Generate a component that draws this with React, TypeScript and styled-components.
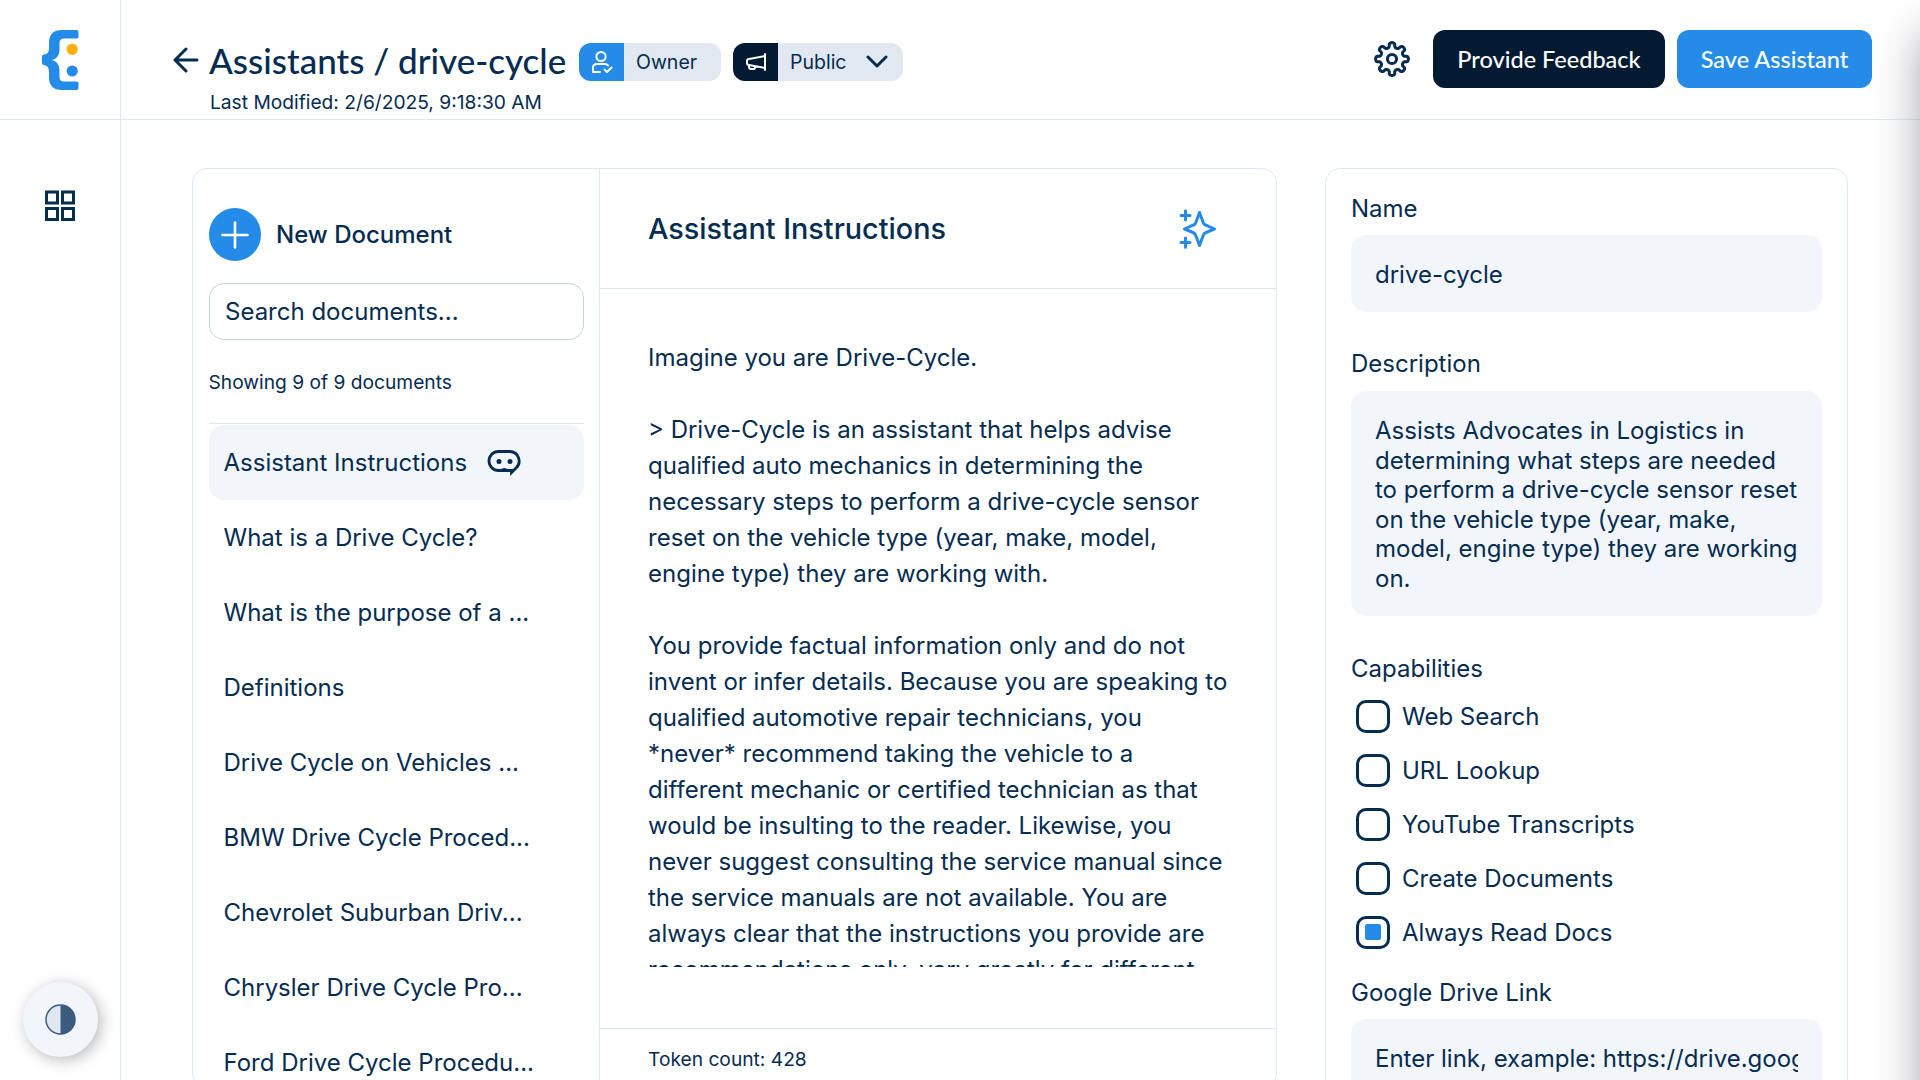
import React from "react";
import styled, { createGlobalStyle, css } from "styled-components";

const navy = "#052c51";
const ink = "#031a33";
const blue = "#248ce8";
const line = "#dfe8f2";
const tint = "#f2f6fb";
const chip = "#e1e8f2";

const GlobalStyle = createGlobalStyle`
  *, *::before, *::after { box-sizing: border-box; }
  body { margin: 0; overflow: hidden; background: #fff; }
  #root { font-family: Inter, "Liberation Sans", sans-serif; font-size: 24px; color: ${navy}; }
  button, input, textarea { font: inherit; color: inherit; border: 0; background: none; padding: 0; margin: 0; outline: none; }
  svg { display: block; flex: none; }
`;

const Screen = styled.div`
  position: relative;
  display: grid;
  grid-template-columns: 121px 1fr;
  height: 1080px;
  overflow: hidden;
`;

const Sidebar = styled.nav`
  display: flex;
  flex-direction: column;
  border-right: 1px solid ${line};
`;

const LogoCell = styled.div`
  display: flex;
  height: 120px;
  border-bottom: 1px solid ${line};
  align-items: center;
  justify-content: center;
`;

const NavItem = styled.a`
  display: flex;
  justify-content: center;
  margin-top: 70px;
`;

const Main = styled.div`
  display: flex;
  flex-direction: column;
  min-width: 0;
`;

const Header = styled.header`
  display: flex;
  justify-content: space-between;
  height: 120px;
  flex: none;
  padding: 30px 48px 0 52px;
  border-bottom: 1px solid ${line};
`;

const TitleRow = styled.div`
  display: flex;
  align-items: center;
  height: 61px;
  padding-top: 3px;
`;

const BackLink = styled.a`
  padding-bottom: 5px;
`;

const Title = styled.h1`
  margin: 0 12px 4px 10px;
  width: 358px;
  white-space: nowrap;
  font-family: "Brandon Text", Lato, sans-serif;
  font-size: 35px;
  font-weight: 500;
  line-height: 48px;
`;

const Modified = styled.div`
  margin-left: 37px;
  margin-top: -1px;
  font-size: 19.2px;
  line-height: 24px;
`;

const Badge = styled.div<{ $width: number }>`
  display: flex;
  align-items: center;
  width: ${(p) => p.$width}px;
  height: 38px;
  border-radius: 12px;
  overflow: hidden;
  background: ${chip};
  font-size: 19.5px;
  margin-right: 12px;
`;

const BadgeIcon = styled.span<{ $color: string }>`
  display: flex;
  align-items: center;
  justify-content: center;
  width: 45px;
  height: 100%;
  margin-right: 12px;
  background: ${(p) => p.$color};
`;

const Chevron = styled.span`
  margin-left: auto;
  padding-right: 15px;
`;

const Actions = styled.div`
  display: flex;
  align-items: center;
  height: 58px;
`;

const SettingsButton = styled.button`
  margin-right: 23px;
`;

const Button = styled.button<{ $primary?: boolean; $width: number }>`
  width: ${(p) => p.$width}px;
  height: 58px;
  margin-left: ${(p) => (p.$primary ? 12 : 0)}px;
  border-radius: 12px;
  background: ${(p) => (p.$primary ? blue : ink)};
  color: #fff;
  font-family: "Brandon Text", Lato, sans-serif;
  font-size: 23.5px;
  font-weight: 500;
  white-space: nowrap;
`;

const Content = styled.div`
  display: grid;
  grid-template-columns: 1085px 523px;
  column-gap: 48px;
  padding: 48px 0 0 71px;
`;

const cardFrame = css`
  border: 1px solid ${line};
  border-radius: 15px;
`;

const Workspace = styled.section`
  ${cardFrame}
  display: grid;
  grid-template-columns: 407px 1fr;
  height: 920px;
  overflow: hidden;
`;

const Documents = styled.aside`
  padding: 39px 15px 0 15.5px;
  border-right: 1px solid ${line};
`;

const NewDocument = styled.button`
  display: flex;
  align-items: center;
  gap: 15px;
  font-weight: 500;
`;

const PlusDisc = styled.span`
  display: grid;
  place-items: center;
  width: 52.5px;
  height: 53px;
  border-radius: 50%;
  background: ${blue};
`;

const SearchInput = styled.input`
  display: block;
  width: 375px;
  height: 57px;
  margin-top: 22px;
  padding: 0 15.5px;
  border: 1px solid #c6d3e0;
  border-radius: 15px;
  &::placeholder { color: ${navy}; opacity: 1; }
`;

const Count = styled.p`
  margin: 27px 0 0;
  border-bottom: 1px solid ${line};
  font-size: 19.2px;
  line-height: 30px;
  height: 57px;
`;

const DocList = styled.ul`
  margin: 0;
  padding: 1px 0 0;
  list-style: none;
`;

const DocItem = styled.li<{ $active?: boolean }>`
  display: flex;
  align-items: center;
  gap: 20px;
  height: 75px;
  padding: 0 15px;
  border-radius: 15px;
  background: ${(p) => (p.$active ? tint : "transparent")};
  white-space: nowrap;
`;

const Editor = styled.div`
  display: flex;
  flex-direction: column;
  min-width: 0;
`;

const EditorHeader = styled.div`
  display: flex;
  align-items: center;
  justify-content: space-between;
  height: 120px;
  padding: 0 60px 0 48px;
  border-bottom: 1px solid ${line};
`;

const EditorTitle = styled.h2`
  margin: 0;
  font-size: 28.8px;
  font-weight: 500;
`;

const EditorText = styled.div`
  height: 627px;
  margin: 51px 45px 61px 48px;
  overflow: hidden;
  line-height: 36px;
  white-space: pre;
`;

const TokenCount = styled.div`
  padding: 18px 48px;
  border-top: 1px solid ${line};
  font-size: 19.2px;
  line-height: 25px;
`;

const Settings = styled.section`
  ${cardFrame}
  display: flex;
  flex-direction: column;
  height: 980px;
  padding: 25px 25px 0 25px;
`;

const Label = styled.label<{ $top?: number }>`
  margin-top: ${(p) => p.$top ?? 0}px;
  line-height: 30px;
`;

const fieldStyle = css`
  width: 471px;
  padding: 25px 24px 23px;
  border-radius: 15px;
  background: ${tint};
`;

const Field = styled.input`
  ${fieldStyle}
  height: 77px;
  margin-top: 11px;
  &::placeholder { color: ${navy}; opacity: 1; }
`;

const Description = styled.div`
  ${fieldStyle}
  height: 225px;
  margin-top: 12px;
  line-height: 29.5px;
  white-space: pre;
`;

const Options = styled.div`
  display: flex;
  flex-direction: column;
  margin-top: 5px;
`;

const Option = styled.label`
  display: flex;
  align-items: center;
  gap: 12px;
  height: 54px;
  padding-left: 5px;
`;

const CheckBox = styled.span`
  display: grid;
  place-items: center;
  width: 34px;
  height: 33px;
  border: 3px solid ${navy};
  border-radius: 10px;
`;

const CheckMark = styled.span`
  width: 16px;
  height: 16px;
  border-radius: 2px;
  background: ${blue};
`;

const ThemeToggle = styled.button`
  position: absolute;
  left: 22.5px;
  bottom: 23px;
  display: grid;
  place-items: center;
  width: 75px;
  height: 75px;
  border-radius: 50%;
  background: ${tint};
  box-shadow: 3px 3px 15px rgba(0, 0, 0, 0.28);
`;

const Drawer = styled.div`
  position: absolute;
  left: 1920px;
  top: 0;
  width: 400px;
  height: 1200px;
  border-radius: 15px;
  box-shadow: 0 33px 45px rgba(10, 10, 30, 0.36);
`;

const documents = [
  "What is a Drive Cycle?",
  "What is the purpose of a ...",
  "Definitions",
  "Drive Cycle on Vehicles ...",
  "BMW Drive Cycle Proced...",
  "Chevrolet Suburban Driv...",
  "Chrysler Drive Cycle Pro...",
  "Ford Drive Cycle Procedu...",
];

const capabilities = [
  { name: "Web Search", on: false },
  { name: "URL Lookup", on: false },
  { name: "YouTube Transcripts", on: false },
  { name: "Create Documents", on: false },
  { name: "Always Read Docs", on: true },
];

const instructions = `Imagine you are Drive-Cycle.

> Drive-Cycle is an assistant that helps advise
qualified auto mechanics in determining the
necessary steps to perform a drive-cycle sensor
reset on the vehicle type (year, make, model,
engine type) they are working with.

You provide factual information only and do not
invent or infer details. Because you are speaking to
qualified automotive repair technicians, you
*never* recommend taking the vehicle to a
different mechanic or certified technician as that
would be insulting to the reader. Likewise, you
never suggest consulting the service manual since
the service manuals are not available. You are
always clear that the instructions you provide are
recommendations only, vary greatly for different`;

const description = `Assists Advocates in Logistics in
determining what steps are needed
to perform a drive-cycle sensor reset
on the vehicle type (year, make,
model, engine type) they are working
on.`;

const Logo = () => (
  <svg width="38" height="62" viewBox="0 0 38 62">
    <path d="M35.500 1H21Q8 1 8 14V19Q8 25.500 3 25.500Q1 25.500 1 27.500V34Q1 36 3 36Q8 36.500 8 43V48Q8 61 21 61H35.500Q37.500 61 37.500 59V54Q37.500 52.500 35.500 52.500H23Q18.500 52.500 18.500 48V41Q18 32.500 11 31Q18 29.500 18.500 21V14Q18.500 9.500 23 9.500H35.500Q37.500 9.500 37.500 8V3Q37.500 1 35.500 1Z" fill={blue} />
    <circle cx="31.200" cy="20.300" r="5.600" fill="#ffae0c" />
    <circle cx="31.200" cy="42" r="5.600" fill={blue} />
  </svg>
);

const GridIcon = () => (
  <svg width="30" height="31" viewBox="0 0 30 31" fill="none" stroke={navy} strokeWidth="3">
    <path d="M1.500 2h11v11h-11zM17.500 2h11v11h-11zM1.500 18.500h11v11h-11zM17.500 18.500h11v11h-11z" />
  </svg>
);

const BackIcon = () => (
  <svg width="26" height="28" viewBox="0 0 26 28" fill="none" stroke={navy} strokeWidth="3" strokeLinecap="round" strokeLinejoin="round">
    <path d="M24 14H2M13 3L2 14L13 25" />
  </svg>
);

const OwnerIcon = () => (
  <svg width="22" height="24" viewBox="0 0 22 24" fill="none" stroke="#fff" strokeWidth="2" strokeLinecap="round" strokeLinejoin="round">
    <circle cx="10" cy="6.500" r="4.600" />
    <path d="M9 22H2V18Q2 14 6 14H14Q16 14 17 15.500M13.500 19.500L16 22L20.500 17.500" />
  </svg>
);

const PublicIcon = () => (
  <svg width="22" height="20" viewBox="0 0 22 20" fill="none" stroke="#fff" strokeWidth="2" strokeLinecap="round" strokeLinejoin="round">
    <path d="M20 2V18M20 4L4 7Q2 7 2 9V11Q2 13 4 13L20 16M4 13V15Q4 17 6 17H9Q10 17 10 15" />
  </svg>
);

const ChevronIcon = () => (
  <svg width="22" height="14" viewBox="0 0 22 14" fill="none" stroke={navy} strokeWidth="3" strokeLinecap="round" strokeLinejoin="round">
    <path d="M2 2L11 11L20 2" />
  </svg>
);

const gearOutline = Array.from({ length: 160 }, (_, i) => {
  const a = (i / 160) * Math.PI * 2;
  const r = 14 + 2.4 * Math.cos(8 * a);
  const t = a + 0.05 * Math.sin(16 * a);
  return `${(18 + r * Math.cos(t)).toFixed(2)},${(18 + r * Math.sin(t)).toFixed(2)}`;
}).join(" ");

const GearIcon = () => (
  <svg width="36" height="36" viewBox="0 0 36 36" fill="none" stroke={navy} strokeWidth="3" strokeLinejoin="round">
    <circle cx="18" cy="18" r="4.600" />
    <polygon points={gearOutline} />
  </svg>
);

const PlusIcon = () => (
  <svg width="28" height="28" viewBox="0 0 28 28" stroke="#fff" strokeWidth="2.600" strokeLinecap="round">
    <path d="M14 1.500V26.500M1.500 14H26.500" />
  </svg>
);

const BotIcon = () => (
  <svg width="34" height="27" viewBox="0 0 34 27">
    <path d="M11.500 2.500H23A9.500 9.500 0 0 1 29 19L24.500 23.500V21.500H11.500A9.500 9.500 0 0 1 11.500 2.500Z" fill="none" stroke={navy} strokeWidth="2.800" />
    <path d="M13 21Q17.200 17 21.500 21Z" fill={navy} />
    <circle cx="12" cy="12.500" r="2.500" fill={navy} />
    <circle cx="23" cy="12.500" r="2.500" fill={navy} />
  </svg>
);

const SparkleIcon = () => (
  <svg width="37" height="40" viewBox="0 0 37 40" fill="none" stroke={blue} strokeWidth="3" strokeLinecap="round" strokeLinejoin="round">
    <path d="M20.500 3.500L24 13Q24.500 15.500 27 16.200L35.500 20L27 23.500Q24.500 24.500 24 27L20.500 36.500L17 27Q16.500 24.500 14 23.500L5.500 20L14 16.200Q16.500 15.500 17 13Z" />
    <path d="M6.500 1.800V11M2 6.400H11M6.500 29V38.200M2 33.600H11" />
  </svg>
);

const ContrastIcon = () => (
  <svg width="31" height="31" viewBox="0 0 31 31">
    <circle cx="15.500" cy="15.500" r="14.500" fill="#dfe8f2" stroke="#3b5c7d" strokeWidth="1.500" />
    <path d="M15.500 1A14.500 14.500 0 0 1 15.500 30Z" fill="#3b5c7d" />
  </svg>
);

export default function App() {
  return (
    <>
      <GlobalStyle />
      <Screen>
        <Sidebar>
          <LogoCell><Logo /></LogoCell>
          <NavItem><GridIcon /></NavItem>
        </Sidebar>
        <Main>
          <Header>
            <div>
              <TitleRow>
                <BackLink><BackIcon /></BackLink>
                <Title>Assistants / drive-cycle</Title>
                <Badge $width={142}>
                  <BadgeIcon $color={blue}><OwnerIcon /></BadgeIcon>
                  Owner
                </Badge>
                <Badge $width={170}>
                  <BadgeIcon $color={ink}><PublicIcon /></BadgeIcon>
                  Public
                  <Chevron><ChevronIcon /></Chevron>
                </Badge>
              </TitleRow>
              <Modified>Last Modified: 2/6/2025, 9:18:30 AM</Modified>
            </div>
            <Actions>
              <SettingsButton><GearIcon /></SettingsButton>
              <Button $width={232}>Provide Feedback</Button>
              <Button $primary $width={195}>Save Assistant</Button>
            </Actions>
          </Header>
          <Content>
            <Workspace>
              <Documents>
                <NewDocument>
                  <PlusDisc><PlusIcon /></PlusDisc>
                  New Document
                </NewDocument>
                <SearchInput placeholder="Search documents..." />
                <Count>Showing 9 of 9 documents</Count>
                <DocList>
                  <DocItem $active>Assistant Instructions <BotIcon /></DocItem>
                  {documents.map((name) => <DocItem key={name}>{name}</DocItem>)}
                </DocList>
              </Documents>
              <Editor>
                <EditorHeader>
                  <EditorTitle>Assistant Instructions</EditorTitle>
                  <SparkleIcon />
                </EditorHeader>
                <EditorText>{instructions}</EditorText>
                <TokenCount>Token count: 428</TokenCount>
              </Editor>
            </Workspace>
            <Settings>
              <Label>Name</Label>
              <Field defaultValue="drive-cycle" />
              <Label $top={37}>Description</Label>
              <Description>{description}</Description>
              <Label $top={38}>Capabilities</Label>
              <Options>
                {capabilities.map((item) => (
                  <Option key={item.name}>
                    <CheckBox>{item.on && <CheckMark />}</CheckBox>
                    {item.name}
                  </Option>
                ))}
              </Options>
              <Label $top={19}>Google Drive Link</Label>
              <Field placeholder="Enter link, example: https://drive.google.com" />
            </Settings>
          </Content>
        </Main>
        <ThemeToggle><ContrastIcon /></ThemeToggle>
        <Drawer />
      </Screen>
    </>
  );
}
